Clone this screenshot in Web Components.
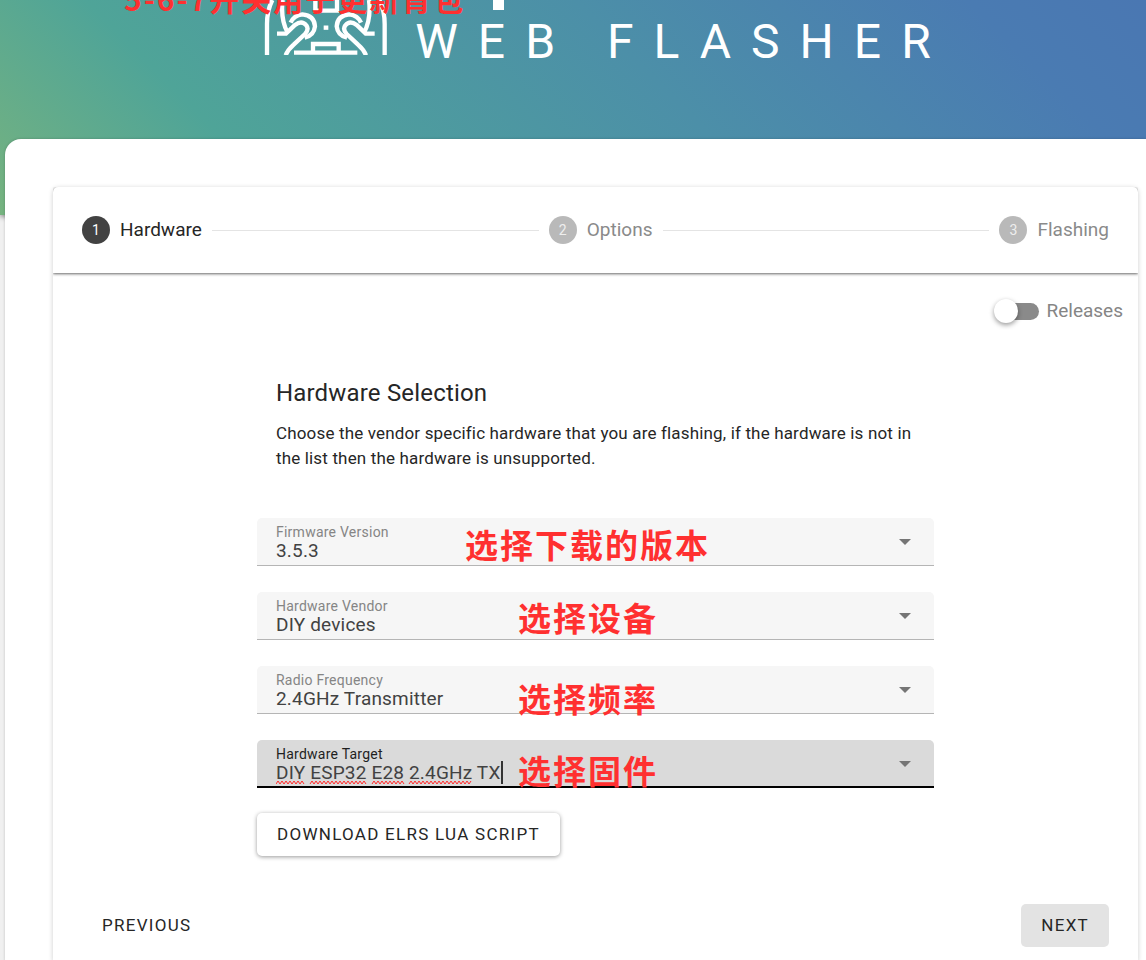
<!DOCTYPE html>
<html lang="en">
<head>
<meta charset="utf-8">
<meta name="viewport" content="width=device-width, initial-scale=1">
<title>Web Flasher</title>
<style>
  body {
    margin: 0;
    font-family: Roboto, "Noto Sans CJK SC", sans-serif;
    color: #262626;
    background: #f0f0f0;
  }
</style>
</head>
<body>
<flasher-app>
  <flasher-header slot="header">
    Web Flasher
    <flasher-note slot="note" style="--size: 30px; left: 124px; top: -20px">5-6-7开关用于更新背包</flasher-note>
  </flasher-header>
  <flasher-stepper>
    <flasher-step slot="steps" number="1" active>Hardware</flasher-step>
    <flasher-step slot="steps" number="2">Options</flasher-step>
    <flasher-step slot="steps" number="3">Flashing</flasher-step>
    <flasher-switch slot="tools" label="Releases"></flasher-switch>
    <flasher-form>
      <span slot="title">Hardware Selection</span>
      <span slot="text">Choose the vendor specific hardware that you are flashing, if the hardware is not in the list then the hardware is unsupported.</span>
      <flasher-field label="Firmware Version" value="3.5.3">
        <flasher-note style="left: 208px; top: 8px">选择下载的版本</flasher-note>
      </flasher-field>
      <flasher-field label="Hardware Vendor" value="DIY devices">
        <flasher-note style="left: 261px; top: 7px">选择设备</flasher-note>
      </flasher-field>
      <flasher-field label="Radio Frequency" value="2.4GHz Transmitter">
        <flasher-note style="left: 261px; top: 14px">选择频率</flasher-note>
      </flasher-field>
      <flasher-field label="Hardware Target" value="DIY ESP32 E28 2.4GHz TX" editing>
        <flasher-note style="left: 261px; top: 12px">选择固件</flasher-note>
      </flasher-field>
      <flasher-button slot="action" variant="raised">Download ELRS Lua Script</flasher-button>
    </flasher-form>
    <flasher-button slot="actions">Previous</flasher-button>
    <flasher-button slot="actions" variant="tonal">Next</flasher-button>
  </flasher-stepper>
</flasher-app>

<script>
function define(name, html, setup) {
  window.customElements.define(name, class extends HTMLElement {
    constructor() {
      super();
      this.attachShadow({ mode: "open" });
      this.shadowRoot.innerHTML = html;
    }

    connectedCallback() {
      if (setup) setup(this, this.shadowRoot);
    }
  });
}

define("flasher-app", `
  <style>
    :host {
      display: flex;
      flex-direction: column;
      min-height: 100vh;
      overflow: hidden;
    }
    main {
      position: relative;
      flex: 1;
      display: flex;
      margin: -76px 0 0 5px;
      padding: 48px 8px 0 48px;
      border-radius: 16px 0 0 0;
      background: #fff;
      box-shadow: 0 0 3px rgba(0, 0, 0, .2);
    }
  </style>
  <slot name="header"></slot>
  <main><slot></slot></main>
`);

define("flasher-header", `
  <style>
    :host {
      display: block;
      position: relative;
      padding-bottom: 145px;
      background: linear-gradient(45deg, #76b37f 0%, #4fa498 22%, #4c8fa8 58%, #4a7bb2 87%, #4a77b2 100%);
      box-shadow: 0 2px 5px rgba(0, 0, 0, .4);
    }
    .brand {
      display: flex;
      justify-content: center;
      gap: 26px;
      padding-left: 68px;
    }
    .name svg {
      display: block;
      margin: 0 0 4px 78px;
    }
    h1 {
      margin: 0;
      font-size: 48px;
      font-weight: 400;
      line-height: 56px;
      letter-spacing: 20px;
      text-transform: uppercase;
      white-space: nowrap;
      color: #fff;
    }
  </style>
  <div class="brand">
    <svg width="126" height="55" viewBox="492 0 378 165" fill="none" stroke="#fff" stroke-width="13" aria-hidden="true">
      <defs>
        <g id="hand">
          <path d="M504 165V72Q504 32 520 0"/>
          <path d="M551 0Q544 58 566 98"/>
          <path d="M534 101H561L588 75Q608 60 622 76Q631 88 618 102L584 134Q566 150 560 166"/>
          <path d="M575 68Q584 46 610 43Q646 46 648 79Q645 107 617 113"/>
        </g>
      </defs>
      <use href="#hand"/>
      <use href="#hand" transform="translate(1361 0) scale(-1 1)"/>
      <path d="M649 0V32H714V0M642 155V132H719V155M585 158H775"/>
      <path d="M674 83H688"/>
    </svg>
    <div class="name">
      <svg width="11" height="10" aria-hidden="true"><rect width="11" height="10" fill="#fff"/></svg>
      <h1><slot></slot></h1>
    </div>
  </div>
  <slot name="note"></slot>
`);

define("flasher-note", `
  <style>
    :host {
      position: absolute;
      z-index: 1;
      font-family: "Noto Sans CJK SC", sans-serif;
      font-size: var(--size, 33px);
      font-weight: 700;
      line-height: 36px;
      letter-spacing: 2px;
      white-space: nowrap;
      color: #ff3030;
      pointer-events: none;
    }
  </style>
  <slot></slot>
`);

define("flasher-stepper", `
  <style>
    :host {
      flex: 1;
      display: flex;
      flex-direction: column;
      border-radius: 5px 5px 0 0;
      box-shadow: 0 1px 5px rgba(0, 0, 0, .2);
    }
    header {
      display: flex;
      align-items: center;
      gap: 10px;
      padding: 29px;
      border-radius: 5px 5px 0 0;
      box-shadow: 0 1px 3px rgba(0, 0, 0, .6);
      clip-path: inset(0 0 -5px 0);
    }
    .tools {
      display: flex;
      justify-content: flex-end;
      padding: 24px 15px 49px;
    }
    footer {
      display: flex;
      justify-content: space-between;
      padding: 48px 29px 14px;
    }
  </style>
  <header><slot name="steps"></slot></header>
  <div class="tools"><slot name="tools"></slot></div>
  <slot></slot>
  <footer><slot name="actions"></slot></footer>
`);

define("flasher-step", `
  <style>
    :host {
      display: flex;
      align-items: center;
      gap: 10px;
      font-size: 19px;
      line-height: 28px;
      color: #8a8a8a;
    }
    :host(:not(:first-of-type)) {
      flex: 1 1 auto;
    }
    :host(:not(:first-of-type))::before {
      content: "";
      flex: 1;
      height: 1px;
      background: #e4e4e4;
    }
    :host([active]) {
      color: #262626;
    }
    b {
      width: 28px;
      border-radius: 50%;
      font-size: 14px;
      font-weight: 400;
      text-align: center;
      color: #eee;
      background: #b9b9b9;
    }
    :host([active]) b {
      color: #fff;
      background: #424242;
    }
  </style>
  <b></b><span><slot></slot></span>
`, (el, root) => {
  root.querySelector("b").textContent = el.getAttribute("number");
});

define("flasher-switch", `
  <style>
    :host {
      display: flex;
      align-items: center;
      gap: 7px;
      font-size: 19px;
      line-height: 28px;
      color: #858585;
    }
    input {
      appearance: none;
      display: flex;
      align-items: center;
      width: 40px;
      height: 17px;
      margin: 0 0 0 5px;
      border-radius: 9px;
      background: #8a8a8a;
    }
    input::before {
      content: "";
      width: 24px;
      height: 24px;
      margin-left: -5px;
      border-radius: 50%;
      background: #fff;
      box-shadow: 0 2px 5px rgba(0, 0, 0, .4);
    }
    input:checked::before {
      margin-left: 21px;
    }
  </style>
  <input type="checkbox" role="switch" id="toggle">
  <label for="toggle"></label>
`, (el, root) => {
  root.querySelector("label").textContent = el.getAttribute("label");
});

define("flasher-form", `
  <style>
    :host {
      box-sizing: border-box;
      display: block;
      width: 62.4%;
      margin: 0 auto;
    }
    h2, p {
      margin: 0;
      padding: 0 19px;
    }
    h2 {
      font-size: 24px;
      font-weight: 400;
      line-height: 38px;
      letter-spacing: .0075em;
    }
    p {
      padding-top: 9px;
      padding-bottom: 47px;
      font-size: 17px;
      line-height: 25px;
      letter-spacing: .0094em;
    }
    .fields {
      display: flex;
      flex-direction: column;
      align-items: stretch;
      gap: 26px;
      margin-bottom: 25px;
    }
  </style>
  <h2><slot name="title"></slot></h2>
  <p><slot name="text"></slot></p>
  <div class="fields"><slot></slot></div>
  <slot name="action"></slot>
`);

define("flasher-field", `
  <style>
    :host {
      display: grid;
      grid-template-columns: 1fr 12px;
      grid-template-rows: 16px 22px;
      align-items: center;
      box-sizing: border-box;
      position: relative;
      height: 48px;
      padding: 6px 23px 3px 19px;
      border-bottom: 1px solid #b5b5b5;
      border-radius: 5px 5px 0 0;
      background: #f6f6f6;
    }
    :host([editing]) {
      padding-bottom: 2px;
      border-bottom: 2px solid #000;
      background: #dadada;
    }
    label {
      font-size: 14px;
      line-height: 16px;
      letter-spacing: .0175em;
      color: #858585;
    }
    :host([editing]) label {
      color: #1f1f1f;
    }
    select, input {
      grid-area: 2 / 1;
      appearance: none;
      box-sizing: border-box;
      width: 100%;
      height: 22px;
      margin: 0;
      padding: 0;
      border: 0;
      outline: 0;
      font: 19px/22px Roboto, sans-serif;
      letter-spacing: .0094em;
      color: #424242;
      background: none;
    }
    .arrow {
      grid-area: 1 / 2 / 3 / 3;
      margin-bottom: 2px;
    }
    /* spelling marks and text caret of the field being edited */
    .marks {
      position: absolute;
      left: 19px;
      top: 21px;
    }
  </style>
  <label for="control"></label>
  <svg class="arrow" width="12" height="6" aria-hidden="true"><path d="M0 0H12L6 6Z" fill="#757575"/></svg>
  <slot></slot>
`, (el, root) => {
  const editing = el.hasAttribute("editing");
  const label = root.querySelector("label");
  const control = document.createElement(editing ? "input" : "select");

  label.textContent = el.getAttribute("label");
  control.id = "control";
  if (editing) {
    control.type = "text";
    control.setAttribute("role", "combobox");
    control.value = el.getAttribute("value");
    const words = [[0, 29], [34, 90], [96, 128], [133, 196]];
    const waves = words.map(([from, to]) => {
      let d = `M${from} 23`;
      for (let x = from + 2, up = true; x <= to; x += 2, up = !up) d += `L${x} ${up ? 20 : 23}`;
      return d;
    }).join("");
    label.insertAdjacentHTML("afterend", `
      <svg class="marks" width="228" height="28" fill="none" aria-hidden="true">
        <path d="${waves}" stroke="#ff2a2a"/>
        <path d="M226 0V23" stroke="#333" stroke-width="2"/>
      </svg>`);
  } else {
    control.add(new Option(el.getAttribute("value")));
  }
  label.after(control);
});

define("flasher-button", `
  <style>
    :host {
      display: inline-block;
      vertical-align: top;
    }
    button {
      display: block;
      height: 43px;
      padding: 0 20px;
      border: 0;
      border-radius: 5px;
      font: 17px/43px Roboto, sans-serif;
      letter-spacing: .075em;
      text-transform: uppercase;
      color: #262626;
      background: none;
    }
    :host([variant="raised"]) button {
      background: #fff;
      box-shadow: 0 1px 4px rgba(0, 0, 0, .4);
    }
    :host([variant="tonal"]) button {
      background: #e3e3e3;
    }
  </style>
  <button type="button"><slot></slot></button>
`);
</script>
</body>
</html>
